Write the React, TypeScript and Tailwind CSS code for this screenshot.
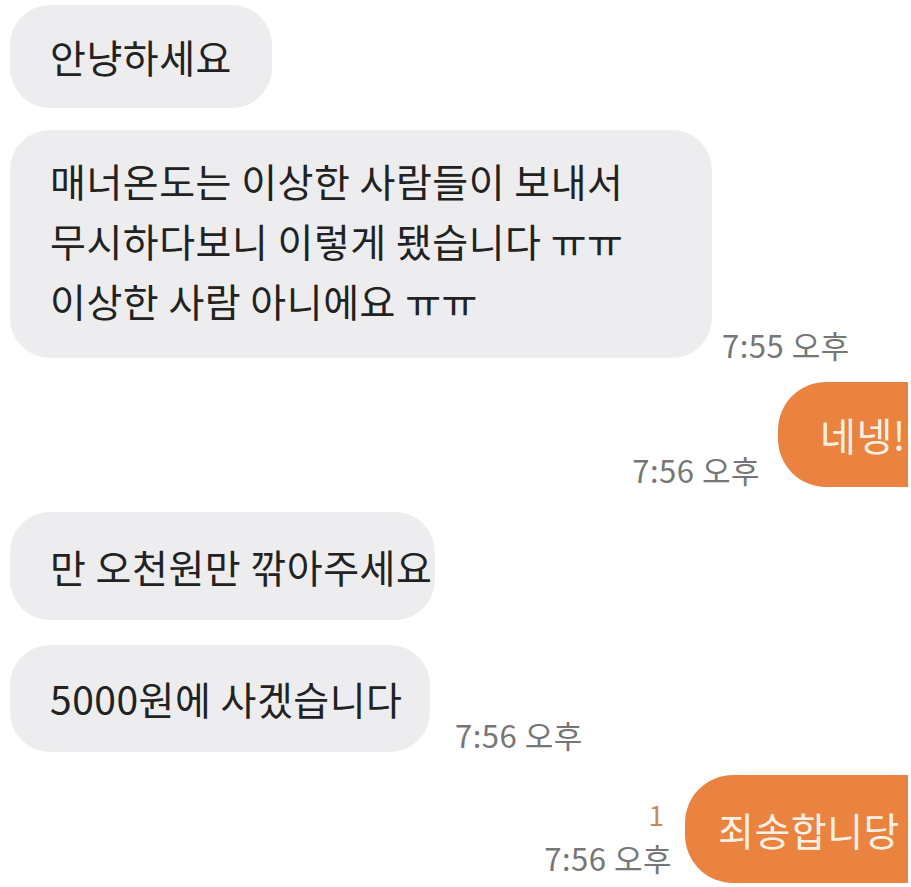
import React from "react";

const font = { fontFamily: '"Noto Sans CJK KR", "Noto Sans", sans-serif' };

function Time({ children }: { children: React.ReactNode }) {
  return (
    <div className="whitespace-nowrap text-[31px] leading-[34px] tracking-[0.5px] text-[#767676]">
      {children}
    </div>
  );
}

export default function App() {
  return (
    <div
      className="relative flex h-[887px] w-[911px] flex-col overflow-hidden bg-white text-[#222222]"
      style={font}
    >
      {/* received: greeting */}
      <div className="flex pl-[10px] pt-[5px]">
        <div className="flex h-[103px] w-[262px] items-center rounded-[40px] bg-[#ededef] pl-[40px] text-[39px] tracking-[0.5px]">
          안냥하세요
        </div>
      </div>

      {/* received: long message */}
      <div className="mt-[22px] flex items-end pl-[10px]">
        <div className="h-[228px] w-[702px] rounded-[40px] bg-[#ededef] pl-[40px] pt-[20px] text-[39px] leading-[60px] tracking-[0.5px]">
          <p>매너온도는 이상한 사람들이 보내서</p>
          <p>무시하다보니 이렇게 됐습니다 ㅠㅠ</p>
          <p>이상한 사람 아니에요 ㅠㅠ</p>
        </div>
        <div className="mb-[-4px] ml-[10px]">
          <Time>7:55 오후</Time>
        </div>
      </div>

      {/* sent: 네넹 */}
      <div className="mt-[24px] flex items-end justify-end pr-[3px]">
        <div className="mr-[18px]">
          <Time>7:56 오후</Time>
        </div>
        <div className="flex h-[105px] w-[130px] items-center rounded-l-[48px] bg-[#ea8340] pl-[42px] text-[39px] tracking-[0.5px] text-[#fdf1e6]">
          네넹!
        </div>
      </div>

      {/* received: discount */}
      <div className="mt-[25px] flex pl-[10px]">
        <div className="flex h-[108px] w-[425px] items-center rounded-[40px] bg-[#ededef] pl-[40px] text-[39px] tracking-[0.5px]">
          만 오천원만 깎아주세요
        </div>
      </div>

      {/* received: 5000 */}
      <div className="mt-[25px] flex items-end pl-[10px]">
        <div className="flex h-[107px] w-[420px] items-center rounded-[40px] bg-[#ededef] pl-[40px] text-[39px] tracking-[0.5px]">
          5000원에 사겠습니다
        </div>
        <div className="ml-[25px]">
          <Time>7:56 오후</Time>
        </div>
      </div>

      {/* sent: sorry */}
      <div className="mt-[23px] flex items-end justify-end pr-[3px]">
        <div className="mb-[8px] mr-[13px] flex flex-col items-end">
          <div className="mb-[10px] mr-[8px] text-[28px] leading-[34px] text-[#c9895a]">1</div>
          <Time>7:56 오후</Time>
        </div>
        <div className="flex h-[108px] w-[223px] items-center rounded-l-[48px] bg-[#ea8340] pl-[33px] text-[39px] tracking-[0.5px] text-[#fdf1e6]">
          죄송합니당
        </div>
      </div>
    </div>
  );
}
